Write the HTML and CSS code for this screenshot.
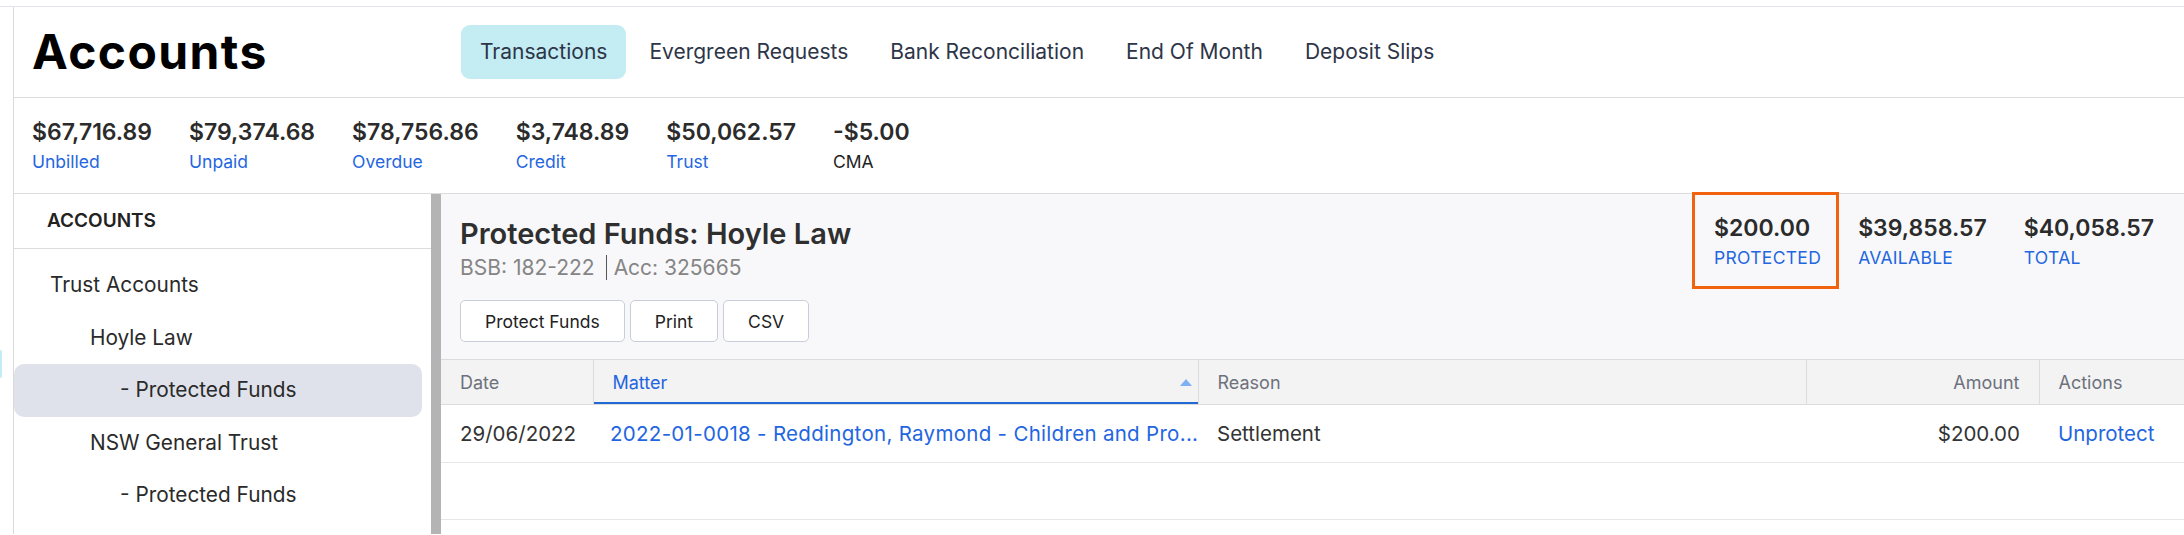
FILE: index.html
```html
<!DOCTYPE html>
<html lang="en">
<head>
  <meta charset="UTF-8" />
  <title>Accounts</title>
  <link rel="stylesheet" href="styles.css">
</head>
<body>
  <div class="edge-tab"></div>
  <div class="app">
    <div class="shell">
      <header class="header">
        <h1 class="title">Accounts</h1>
        <nav class="tabs">
          <a class="tab active">Transactions</a>
          <a class="tab">Evergreen Requests</a>
          <a class="tab">Bank Reconciliation</a>
          <a class="tab">End Of Month</a>
          <a class="tab">Deposit Slips</a>
        </nav>
      </header>

      <div class="stats">
        <div class="stat"><div class="value">$67,716.89</div><a class="label">Unbilled</a></div>
        <div class="stat"><div class="value">$79,374.68</div><a class="label">Unpaid</a></div>
        <div class="stat"><div class="value">$78,756.86</div><a class="label">Overdue</a></div>
        <div class="stat"><div class="value">$3,748.89</div><a class="label">Credit</a></div>
        <div class="stat"><div class="value">$50,062.57</div><a class="label">Trust</a></div>
        <div class="stat"><div class="value">-$5.00</div><span class="label plain">CMA</span></div>
      </div>

      <div class="body">
        <aside class="sidebar">
          <div class="side-head">ACCOUNTS</div>
          <ul class="tree">
            <li class="lvl1">Trust Accounts</li>
            <li class="lvl2">Hoyle Law</li>
            <li class="lvl3 selected">- Protected Funds</li>
            <li class="lvl2">NSW General Trust</li>
            <li class="lvl3">- Protected Funds</li>
          </ul>
        </aside>
        <div class="splitter"></div>

        <main class="panel">
          <div class="panel-head">
            <div class="panel-info">
              <h2 class="panel-title">Protected Funds: Hoyle Law</h2>
              <div class="panel-sub">BSB: 182-222<span class="sep">Acc: 325665</span></div>
              <div class="buttons">
                <button>Protect Funds</button>
                <button>Print</button>
                <button>CSV</button>
              </div>
            </div>
            <div class="summary">
              <div class="stat highlight"><div class="value">$200.00</div><a class="label caps">PROTECTED</a></div>
              <div class="stat"><div class="value">$39,858.57</div><a class="label caps">AVAILABLE</a></div>
              <div class="stat"><div class="value">$40,058.57</div><a class="label caps">TOTAL</a></div>
            </div>
          </div>

          <table class="grid">
            <colgroup>
              <col style="width: 152px">
              <col style="width: 605px">
              <col style="width: 608px">
              <col style="width: 233px">
              <col>
            </colgroup>
            <thead>
              <tr>
                <th>Date</th>
                <th class="sorted">Matter<span class="arrow"></span></th>
                <th>Reason</th>
                <th class="num">Amount</th>
                <th>Actions</th>
              </tr>
            </thead>
            <tbody>
              <tr>
                <td>29/06/2022</td>
                <td class="matter"><a>2022-01-0018 - Reddington, Raymond - Children and Pro...</a></td>
                <td>Settlement</td>
                <td class="num">$200.00</td>
                <td><a>Unprotect</a></td>
              </tr>
              <tr class="empty">
                <td></td><td></td><td></td><td></td><td></td>
              </tr>
            </tbody>
          </table>
        </main>
      </div>
    </div>
  </div>
</body>
</html>
```

FILE: styles.css
```css
body {
  margin: 0;
  padding-top: 6px;
  font-family: Inter, 'Noto Sans', sans-serif;
  color: #333;
  background: #fff;
  overflow: hidden;
}
a {
  color: #1f66e0;
  text-decoration: none;
  cursor: pointer;
}
.edge-tab {
  position: absolute;
  left: 0;
  top: 350px;
  width: 2px;
  height: 28px;
  background: #c4ecf4;
  border-radius: 0 2px 2px 0;
}
.app {
  border-top: 1px solid #e2e2e8;
}
.shell {
  margin-left: 13px;
  border-left: 1px solid #dadada;
}

/* header */
.header {
  height: 90px;
  display: flex;
  align-items: center;
  border-bottom: 1px solid #dcdcdc;
}
.title {
  width: 410px;
  margin: 0;
  padding-left: 18px;
  font-size: 48px;
  line-height: 58px;
  font-weight: 700;
  letter-spacing: 1.4px;
  color: #000;
}
.tabs {
  display: flex;
  gap: 4px;
  padding-left: 19px;
}
.tab {
  height: 54px;
  line-height: 54px;
  padding: 0 19px;
  border-radius: 9px;
  font-size: 21px;
  color: #2d3548;
}
.tab.active {
  background: #c3ecf3;
}

/* stats */
.stats {
  display: flex;
  gap: 37px;
  height: 96px;
  padding: 20px 0 0 18px;
  box-sizing: border-box;
  border-bottom: 1px solid #dcdcdc;
}
.stat {
  display: flex;
  flex-direction: column;
  position: relative;
}
.value {
  font-size: 23px;
  line-height: 28px;
  font-weight: 600;
  color: #2b2b2b;
}
.label {
  margin-top: 5px;
  font-size: 17.5px;
  line-height: 22px;
}
.label.plain {
  color: #222;
}
.label.caps {
  letter-spacing: 0.3px;
}

/* body */
.body {
  display: flex;
  height: 340px;
}
.sidebar {
  width: 417px;
  flex: none;
}
.side-head {
  height: 54px;
  line-height: 54px;
  padding-left: 33px;
  font-size: 19px;
  font-weight: 600;
  color: #222;
  border-bottom: 1px solid #dcdcdc;
}
.tree {
  list-style: none;
  margin: 0;
  padding: 10px 9px 0 0;
}
.tree li {
  height: 52.5px;
  line-height: 52.5px;
  font-size: 20.8px;
  color: #2a2a2a;
  border-radius: 10px;
}
.lvl1 { padding-left: 36px; }
.lvl2 { padding-left: 76px; }
.lvl3 { padding-left: 106px; }
.tree li.selected {
  background: #dfe2eb;
}
.splitter {
  width: 10px;
  flex: none;
  background: #b4b4b4;
}

/* main panel */
.panel {
  flex: 1;
  min-width: 0;
}
.panel-head {
  display: flex;
  justify-content: space-between;
  background: #f8f8fa;
  padding: 0 30px 16px 19px;
  height: 165px;
  box-sizing: border-box;
}
.panel-title {
  margin: 22px 0 0;
  font-size: 29px;
  line-height: 35px;
  font-weight: 600;
  color: #2f2f2f;
}
.panel-sub {
  margin-top: 5px;
  font-size: 21px;
  line-height: 24px;
  color: #858585;
}
.sep {
  border-left: 1px solid #555;
  margin-left: 11px;
  padding-left: 7px;
}
.buttons {
  display: flex;
  gap: 5px;
  margin-top: 20px;
}
.buttons button {
  height: 42px;
  padding: 0 24px;
  font-family: inherit;
  font-size: 17.5px;
  color: #222;
  background: #fff;
  border: 1px solid #c9cdd9;
  border-radius: 5px;
}
.summary {
  display: flex;
  align-items: flex-start;
  gap: 37px;
  padding-top: 20px;
}
.highlight::after {
  content: "";
  position: absolute;
  left: -22px;
  top: -22px;
  right: -18px;
  bottom: -20px;
  border: 3px solid #f1620f;
}

/* table */
.grid {
  width: 100%;
  border-collapse: collapse;
  table-layout: fixed;
}
.grid th {
  height: 44px;
  padding: 0 19px;
  text-align: left;
  font-size: 18px;
  font-weight: 400;
  color: #6d717b;
  background: #f3f3f4;
  border-top: 1px solid #dcdcdc;
  border-bottom: 1px solid #dcdcdc;
  border-left: 1px solid #dcdcdc;
}
.grid th:first-child {
  border-left: none;
}
.grid th.sorted {
  color: #1f66e0;
  position: relative;
  box-shadow: inset 0 -2px 0 #2369d6;
}
.arrow {
  position: absolute;
  right: 6px;
  top: 19px;
  border-left: 6px solid transparent;
  border-right: 6px solid transparent;
  border-bottom: 7px solid #7fb0f2;
}
.grid td {
  height: 57px;
  padding: 0 19px;
  font-size: 20.5px;
  color: #333;
  border-bottom: 1px solid #e6e6e6;
  white-space: nowrap;
}
.grid .num {
  text-align: right;
}
.grid td.matter {
  padding: 0 0 0 17px;
  letter-spacing: 0.3px;
}
.grid tr.empty td {
  height: 56px;
}
```
